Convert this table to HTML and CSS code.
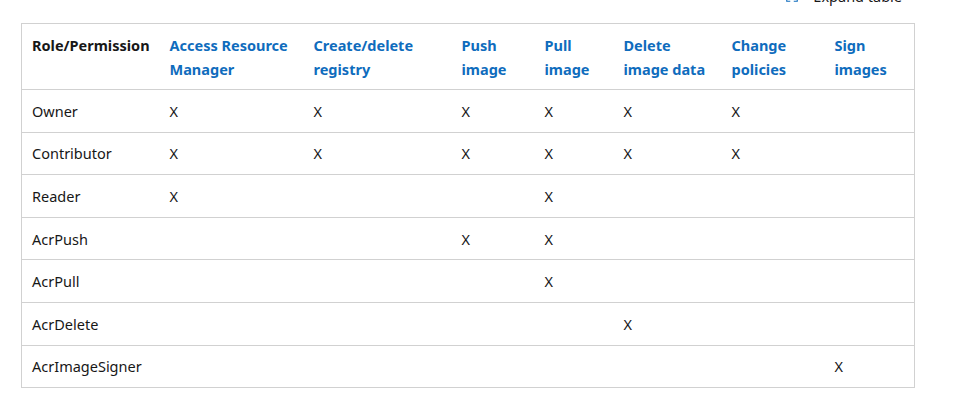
FILE: index.html
```html
<!DOCTYPE html>
<html lang="en">
<head>
<meta charset="utf-8">
<title>ACR roles</title>
<link rel="stylesheet" href="styles.css">
</head>
<body>
<div class="page">
  <div class="toolbar">
    <button class="expand" type="button">
      <svg class="expand-icon" width="14" height="14" viewBox="0 0 16 16" aria-hidden="true">
        <path d="M2 6V2h4M10 2h4v4M14 10v4h-4M6 14H2v-4" fill="none" stroke="#0f6cbd" stroke-width="1.3"/>
      </svg>
      <span>Expand table</span>
    </button>
  </div>
  <table class="roles">
    <colgroup>
      <col class="c1"><col class="c2"><col class="c3"><col class="c4"><col class="c5"><col class="c6"><col class="c7"><col class="c8">
    </colgroup>
    <thead>
      <tr>
        <th>Role/Permission</th>
        <th><a href="#">Access Resource Manager</a></th>
        <th><a href="#">Create/delete registry</a></th>
        <th><a href="#">Push image</a></th>
        <th><a href="#">Pull image</a></th>
        <th><a href="#">Delete image data</a></th>
        <th><a href="#">Change policies</a></th>
        <th><a href="#">Sign images</a></th>
      </tr>
    </thead>
    <tbody>
      <tr><td>Owner</td><td>X</td><td>X</td><td>X</td><td>X</td><td>X</td><td>X</td><td></td></tr>
      <tr><td>Contributor</td><td>X</td><td>X</td><td>X</td><td>X</td><td>X</td><td>X</td><td></td></tr>
      <tr><td>Reader</td><td>X</td><td></td><td></td><td>X</td><td></td><td></td><td></td></tr>
      <tr><td>AcrPush</td><td></td><td></td><td>X</td><td>X</td><td></td><td></td><td></td></tr>
      <tr><td>AcrPull</td><td></td><td></td><td></td><td>X</td><td></td><td></td><td></td></tr>
      <tr><td>AcrDelete</td><td></td><td></td><td></td><td></td><td>X</td><td></td><td></td></tr>
      <tr><td>AcrImageSigner</td><td></td><td></td><td></td><td></td><td></td><td></td><td>X</td></tr>
    </tbody>
  </table>
</div>
</body>
</html>
```
FILE: styles.css
```css
html, body {
  margin: 0;
  padding: 0;
  background: #ffffff;
}
body {
  font-family: "Noto Sans", "Open Sans", "DejaVu Sans", sans-serif;
  font-size: 14.5px;
  color: #171717;
}
.page {
  padding-left: 21px;
}
.toolbar {
  width: 893px;
  display: flex;
  justify-content: flex-end;
  margin-top: -15px;
  height: 38px;
}
.expand {
  display: flex;
  align-items: center;
  gap: 14px;
  border: 0;
  background: none;
  padding: 0 12px 0 0;
  font: inherit;
  font-size: 14.5px;
  color: #171717;
  height: 22px;
}
.roles {
  border-collapse: collapse;
  table-layout: fixed;
  width: 893px;
  border: 1px solid #d1d1d1;
}
.c1 { width: 138px; }
.c2 { width: 144px; }
.c3 { width: 148px; }
.c4 { width: 83px; }
.c5 { width: 79px; }
.c6 { width: 108px; }
.c7 { width: 103px; }
.c8 { width: 90px; }
.roles th {
  text-align: left;
  font-weight: 700;
  line-height: 24px;
  padding: 9px 6px 8px 10px;
  vertical-align: top;
  border-bottom: 1px solid #d1d1d1;
}
.roles th a {
  color: #0f6cbd;
  text-decoration: none;
}
.roles td {
  line-height: 24px;
  padding: 8.8px 8px 8.8px 10px;
  border-bottom: 1px solid #d1d1d1;
  vertical-align: middle;
}
```
